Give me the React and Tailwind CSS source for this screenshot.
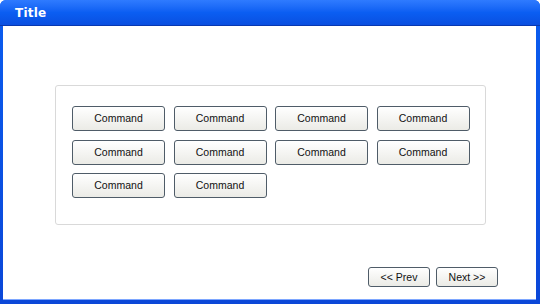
import React from 'react';

const commands = ['Command', 'Command', 'Command', 'Command', 'Command', 'Command', 'Command', 'Command', 'Command', 'Command'];

const XpButton = ({ children, className }) => (
  <button
    className={`border border-[#4f5c68] rounded-[3px] bg-gradient-to-b from-white to-[#ebebe6] text-[10.5px] text-[#111] leading-none ${className}`}
    style={{ fontFamily: '"Liberation Sans", Arial, sans-serif' }}
  >
    {children}
  </button>
);

const App = () => {
  return (
    <div className="w-[540px] h-[304px] flex flex-col rounded-t-[6px] bg-gradient-to-b from-[#0a5df0] to-[#0b47d8] overflow-hidden">
      {/* Title bar */}
      <div className="h-[26px] shrink-0 flex items-center pl-[15px] bg-gradient-to-b from-[#2f7bff] via-[#0b5ef2] to-[#0a4fe0] border-b border-[#0838b0]">
        <span
          className="text-white text-[12px] font-bold tracking-[0.2px]"
          style={{ fontFamily: '"DejaVu Sans", Verdana, sans-serif' }}
        >
          Title
        </span>
      </div>

      {/* Client area */}
      <div className="flex-1 flex flex-col ml-[3px] mr-[4px] mb-[4px] bg-white border-b border-[#7ea7ff]">
        <div className="pt-[59px] pl-[52px]">
          <div className="w-[431px] h-[140px] border border-[#d9d9d9] rounded-[3px] pt-[20px] pl-[16px]">
            <div className="grid grid-cols-[repeat(4,93px)] gap-x-[8.5px] gap-y-[8.5px]">
              {commands.map((label, i) => (
                <XpButton key={i} className="h-[25px] w-[93px]">{label}</XpButton>
              ))}
            </div>
          </div>
        </div>

        <div className="flex-1" />

        {/* Footer nav */}
        <div className="flex justify-end gap-[6px] pr-[38px] pb-[12px]">
          <XpButton className="h-[20px] w-[62px]">&lt;&lt; Prev</XpButton>
          <XpButton className="h-[20px] w-[62px]">Next &gt;&gt;</XpButton>
        </div>
      </div>
    </div>
  );
};

export default App;
